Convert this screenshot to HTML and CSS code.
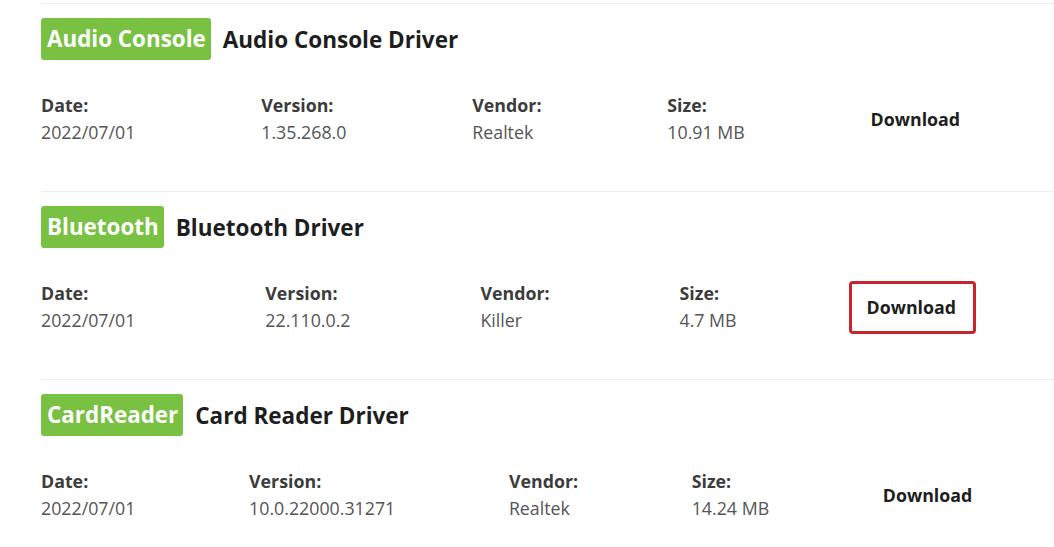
FILE: index.html
```html
<!DOCTYPE html>
<html lang="en">
<head>
    <meta charset="UTF-8" />
    <title>Drivers</title>
    <link rel="stylesheet" href="styles.css">
</head>
<body>
    <div class="list">
        <div class="driver">
            <div class="head">
                <span class="tag">Audio Console</span>
                <h3 class="name">Audio Console Driver</h3>
            </div>
            <div class="info">
                <div class="cell"><b>Date:</b><span>2022/07/01</span></div>
                <div class="cell"><b>Version:</b><span>1.35.268.0</span></div>
                <div class="cell"><b>Vendor:</b><span>Realtek</span></div>
                <div class="cell"><b>Size:</b><span>10.91 MB</span></div>
                <div class="cell"><a href="#" class="down">Download</a></div>
            </div>
        </div>
        <div class="driver">
            <div class="head">
                <span class="tag">Bluetooth</span>
                <h3 class="name">Bluetooth Driver</h3>
            </div>
            <div class="info">
                <div class="cell"><b>Date:</b><span>2022/07/01</span></div>
                <div class="cell"><b>Version:</b><span>22.110.0.2</span></div>
                <div class="cell"><b>Vendor:</b><span>Killer</span></div>
                <div class="cell"><b>Size:</b><span>4.7 MB</span></div>
                <div class="cell"><a href="#" class="down marked">Download</a></div>
            </div>
        </div>
        <div class="driver">
            <div class="head">
                <span class="tag">CardReader</span>
                <h3 class="name">Card Reader Driver</h3>
            </div>
            <div class="info">
                <div class="cell"><b>Date:</b><span>2022/07/01</span></div>
                <div class="cell"><b>Version:</b><span>10.0.22000.31271</span></div>
                <div class="cell"><b>Vendor:</b><span>Realtek</span></div>
                <div class="cell"><b>Size:</b><span>14.24 MB</span></div>
                <div class="cell"><a href="#" class="down">Download</a></div>
            </div>
        </div>
    </div>
</body>
</html>
```

FILE: styles.css
```css
* {
    margin: 0;
    padding: 0;
}
html,
body {
    background: #fff;
    overflow: hidden;
}
body {
    font-family: "Open Sans", "Liberation Sans", sans-serif;
    color: #555;
}
.list {
    width: 1045px;
    margin-left: 41px;
    padding-top: 3px;
}
.driver {
    border-top: 1px solid #eeeeee;
    padding: 14px 0 45px;
}
.driver .head {
    display: flex;
    align-items: center;
    height: 42px;
}
.driver .tag {
    background-color: #79c142;
    color: #fff;
    font-size: 22.4px;
    font-weight: 700;
    line-height: 42px;
    padding: 0 5px 0 6px;
    border-radius: 3px;
}
.driver .name {
    margin-left: 12px;
    font-size: 22.5px;
    font-weight: 700;
    color: #1e1e1e;
}
.driver .info {
    display: flex;
    align-items: center;
    margin-top: 32px;
}
.info .cell {
    flex: 1 1 auto;
    font-size: 17.8px;
    line-height: 27px;
}
.info .cell b,
.info .cell span {
    display: block;
}
.info .cell b {
    color: #3c3c3c;
}
.info .down {
    display: inline-block;
    color: #1e1e1e;
    font-weight: 700;
    text-decoration: none;
}
.info .down.marked {
    border: 3px solid #c9232d;
    border-radius: 4px;
    padding: 10px 17px 10px 15px;
    margin: -13px -20px -13px -18px;
}
```
